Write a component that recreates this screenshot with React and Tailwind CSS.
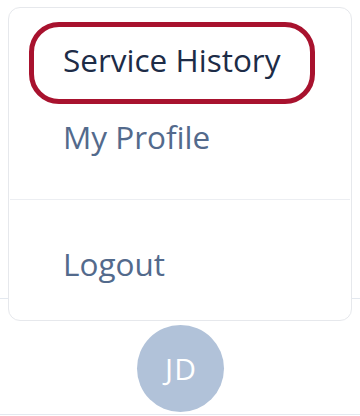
export default function App() {
  const font = { fontFamily: "'Open Sans', 'Noto Sans', sans-serif" };
  return (
    <div className="relative w-[360px] h-[416px] bg-white overflow-hidden" style={font}>
      <div className="absolute left-0 right-0 top-[298px] h-px bg-[#e3e8ef]" />
      <div className="absolute left-0 right-0 top-[414px] h-px bg-[#e3e8ef]" />
      <div className="absolute left-[8px] top-[7px] w-[344px] h-[314px] rounded-xl border border-[#e6e8ec] bg-white flex flex-col">
        <div className="pt-[14px] px-[20px]">
          <div className="h-[82px] w-[286px] rounded-[30px] border-[5px] border-[#a8122e] flex items-center pl-[29px] pb-[6px]">
            <span className="text-[31.5px] leading-none text-[#1d2c47]">Service History</span>
          </div>
        </div>
        <div className="h-[66px] flex items-center pl-[54px] pt-[4px]">
          <span className="text-[31.5px] leading-none text-[#536a8c]">My Profile</span>
        </div>
        <div className="mt-[33px] mx-px h-px bg-[#eceef2]" />
        <div className="h-[128px] flex items-center pl-[54px] pt-[7px]">
          <span className="text-[31.5px] leading-none text-[#536a8c]">Logout</span>
        </div>
      </div>
      <div className="absolute left-[137px] top-[325px] w-[87px] h-[87px] rounded-full bg-[#b1c2d9] flex items-center justify-center">
        <span className="text-[30px] leading-none text-white tracking-[0.04em] pl-[1px]">JD</span>
      </div>
    </div>
  );
}
